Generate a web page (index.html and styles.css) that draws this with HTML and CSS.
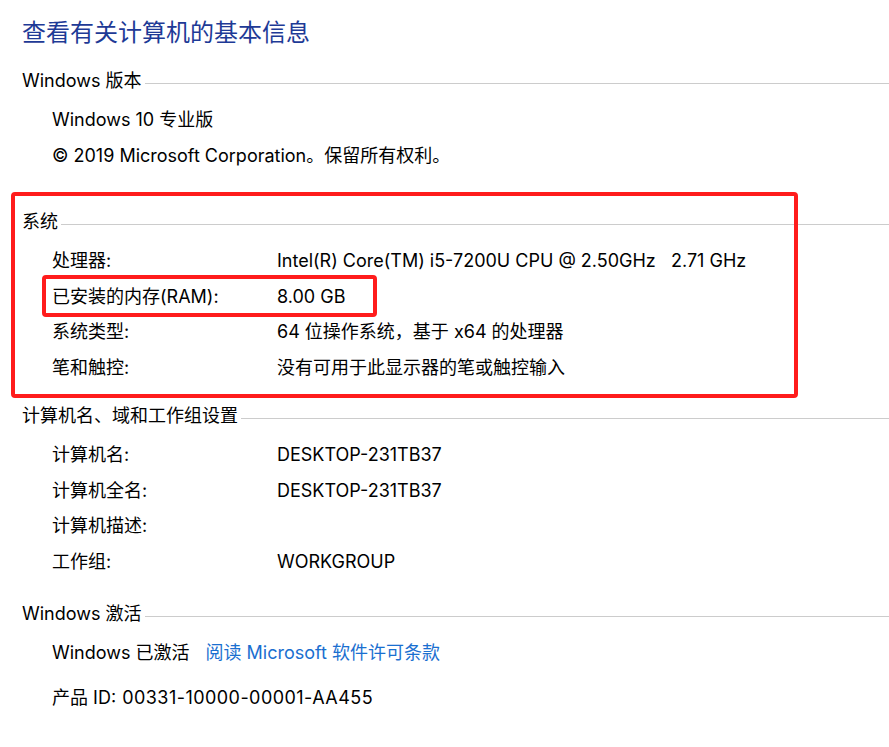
FILE: index.html
```html
<!DOCTYPE html>
<html lang="zh-CN">
<head>
<meta charset="utf-8">
<title>系统</title>
<link rel="stylesheet" href="styles.css">
</head>
<body>
<div class="page">
  <h1 class="title">查看有关计算机的基本信息</h1>

  <section class="sec sec-edition">
    <div class="sec-head"><span>Windows 版本</span><i class="rule"></i></div>
    <div class="line">Windows 10 专业版</div>
    <div class="line">© 2019 Microsoft Corporation。保留所有权利。</div>
  </section>

  <section class="sec sec-system">
    <div class="mark mark-outer"></div>
    <div class="mark mark-inner"></div>
    <div class="sec-head"><span>系统</span><i class="rule"></i></div>
    <div class="grid">
      <div>处理器:</div><div>Intel(R) Core(TM) i5-7200U CPU @ 2.50GHz&nbsp;&nbsp;&nbsp;2.71 GHz</div>
      <div>已安装的内存(RAM):</div><div>8.00 GB</div>
      <div>系统类型:</div><div>64 位操作系统，基于 x64 的处理器</div>
      <div>笔和触控:</div><div>没有可用于此显示器的笔或触控输入</div>
    </div>
  </section>

  <section class="sec sec-name">
    <div class="sec-head"><span>计算机名、域和工作组设置</span><i class="rule"></i></div>
    <div class="grid">
      <div>计算机名:</div><div>DESKTOP-231TB37</div>
      <div>计算机全名:</div><div>DESKTOP-231TB37</div>
      <div>计算机描述:</div><div></div>
      <div>工作组:</div><div>WORKGROUP</div>
    </div>
  </section>

  <section class="sec sec-activation">
    <div class="sec-head"><span>Windows 激活</span><i class="rule"></i></div>
    <div class="line">Windows 已激活<a class="link" href="#">阅读 Microsoft 软件许可条款</a></div>
    <div class="line pid">产品 ID: <span class="pid-num">00331-10000-00001-AA455</span></div>
  </section>
</div>
</body>
</html>
```

FILE: styles.css
```css
html, body {
  margin: 0;
  padding: 0;
  background: #ffffff;
}

body {
  font-family: "Segoe UI", "Inter", "Noto Sans CJK SC", sans-serif;
  font-size: 18px;
  color: #000000;
  overflow: hidden;
}

.page {
  padding: 17px 0 0 22px;
}

.title {
  margin: 0 0 14px 0;
  font-size: 24px;
  line-height: 32px;
  font-weight: normal;
  color: #1e3a96;
}

.sec {
  position: relative;
}

.sec-head {
  display: flex;
  align-items: center;
  height: 36px;
  line-height: 36px;
  margin-bottom: 3px;
}

.sec-head span {
  white-space: nowrap;
}

.rule {
  flex: 1;
  height: 0;
  border-top: 1px solid #cccccc;
  margin: 4px 0 0 3px;
}

.line {
  padding-left: 30px;
  line-height: 35.5px;
  white-space: nowrap;
}

.grid {
  display: grid;
  grid-template-columns: 225px 1fr;
  padding-left: 30px;
  line-height: 35.5px;
  white-space: nowrap;
}

.grid > div {
  min-height: 35.5px;
}

.sec-edition { margin-bottom: 31px; }
.sec-system { margin-bottom: 13px; }
.sec-name { margin-bottom: 17px; }

.pid { margin-top: 9.5px; }

.pid-num {
  letter-spacing: 0.45px;
  margin-left: 1px;
}

.link {
  color: #1a6fd0;
  text-decoration: none;
  margin-left: 16px;
}

.mark {
  position: absolute;
  box-sizing: border-box;
  border: 4px solid #ff1c1c;
  border-radius: 4px;
  pointer-events: none;
}

.mark-outer {
  left: -11px;
  top: -12px;
  width: 787px;
  height: 206px;
}

.mark-inner {
  left: 20px;
  top: 71px;
  width: 335px;
  height: 42px;
}
```
